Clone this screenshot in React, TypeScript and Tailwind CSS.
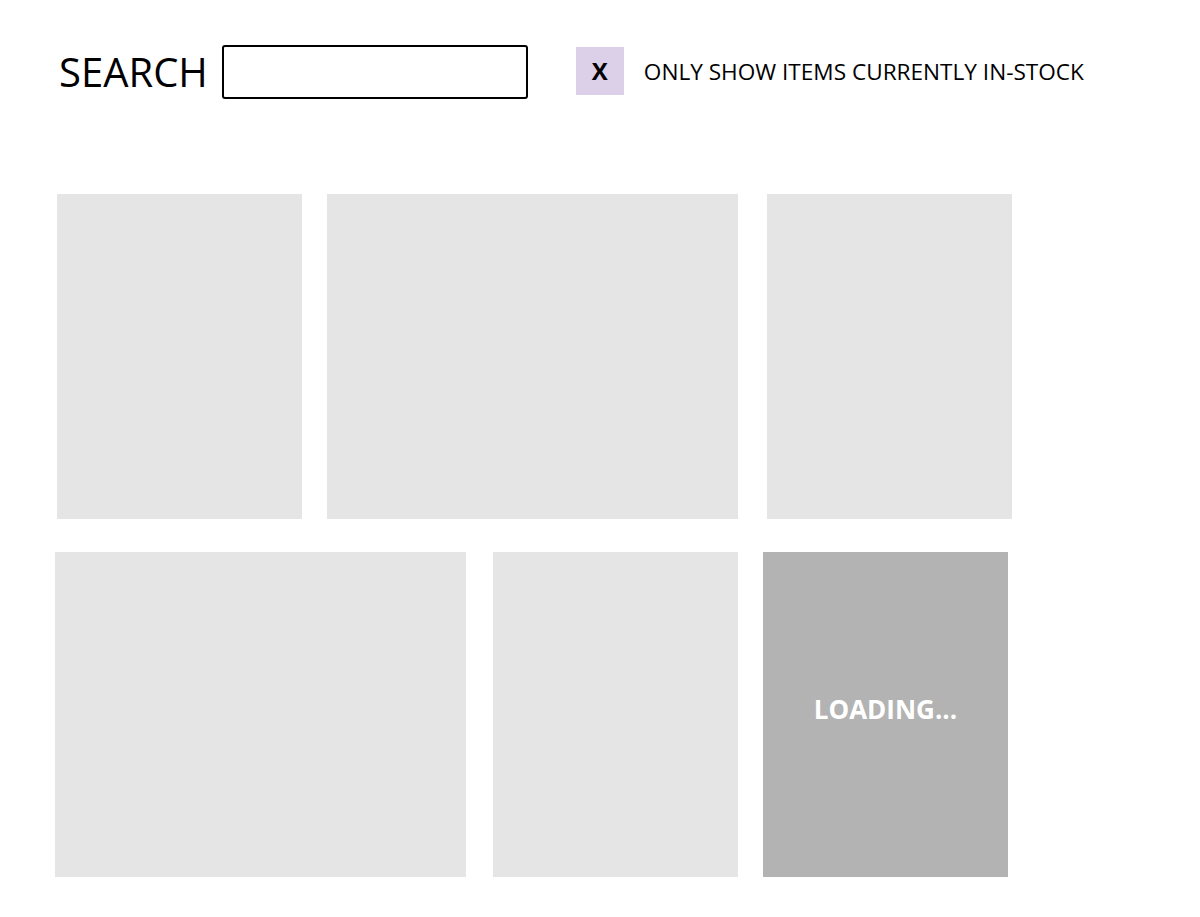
import React from "react";

const FONT = { fontFamily: '"Open Sans", "Noto Sans", sans-serif' };

function Tile({ className = "", children }: { className?: string; children?: React.ReactNode }) {
  return (
    <div className={`h-[325px] shrink-0 bg-[#e5e5e5] ${className}`}>
      {children}
    </div>
  );
}

export default function App() {
  return (
    <div className="w-[1200px] h-[917px] bg-white text-black" style={FONT}>
      {/* Search bar */}
      <div className="flex items-center pt-[45px] pl-[59px]">
        <span className="text-[40px] leading-none font-normal">SEARCH</span>
        <input
          className="ml-[14px] w-[306px] h-[54px] border-2 border-black rounded-[3px] outline-none px-2"
          type="text"
        />
        <div className="ml-[48px] -mt-[3px] w-[48px] h-[48px] bg-[#dccfe8] flex items-center justify-center text-[24px] font-bold">
          X
        </div>
        <span className="ml-[20px] text-[22.6px] leading-none">ONLY SHOW ITEMS CURRENTLY IN-STOCK</span>
      </div>

      {/* Grid */}
      <div className="flex flex-col mt-[95px] gap-[33px]">
        <div className="flex pl-[57px]">
          <Tile className="w-[245px]" />
          <Tile className="w-[411px] ml-[25px]" />
          <Tile className="w-[245px] ml-[29px]" />
        </div>
        <div className="flex pl-[55px]">
          <Tile className="w-[411px]" />
          <Tile className="w-[245px] ml-[27px]" />
          <Tile className="w-[245px] ml-[25px] !bg-[#b3b3b3] flex items-center justify-center">
            <span className="text-white font-bold text-[26px] -mt-[10px]">LOADING...</span>
          </Tile>
        </div>
      </div>
    </div>
  );
}
